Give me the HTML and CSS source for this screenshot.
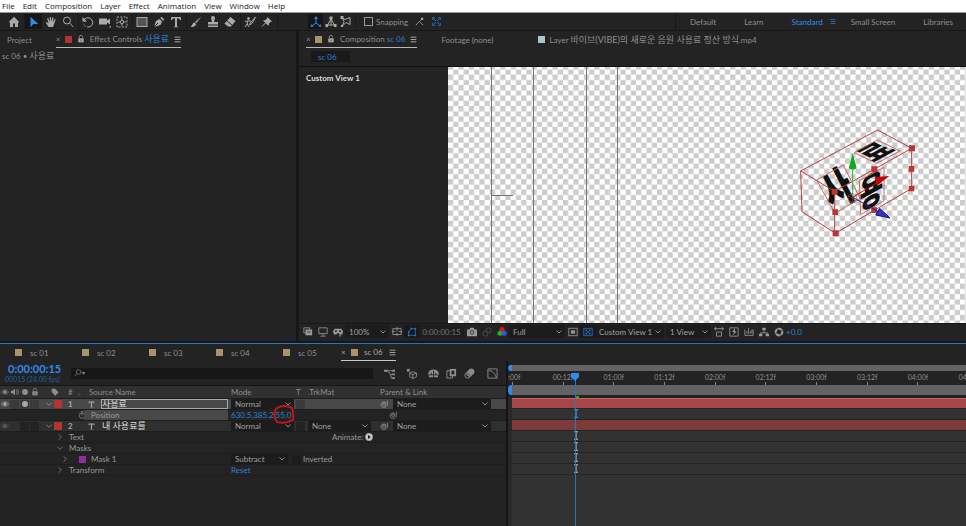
FILE: index.html
```html
<!DOCTYPE html>
<html lang="en">
<head>
  <meta charset="UTF-8">
  <title>sc 06</title>
  <link rel="stylesheet" href="styles.css">
</head>
<body>

  <!-- Icon set, 12x12 grid -->
  <svg class="sprite" aria-hidden="true">
    <symbol id="home" viewBox="0 0 12 12"><path d="M6 .8.5 6.2H2V11h3V7.5h2V11h3V6.2h1.5z" fill="currentColor"/></symbol>
    <symbol id="arrow" viewBox="0 0 12 12"><path d="M2.5.8v10.4l2.8-3.1h5z" fill="currentColor"/></symbol>
    <symbol id="hand" viewBox="0 0 12 12"><path d="M3.5 11 .8 6.6l1-.6 1.7 1.4L2.2 2.2l1-.3L4.8 6 4.7 1h1.1l.5 4.8L7.3 1.3l1.1.2-.4 4.7 1.7-3.3 1 .5L9 8.2 8 11z" fill="currentColor"/></symbol>
    <symbol id="search" viewBox="0 0 12 12"><circle cx="5" cy="4.5" r="3.5"/><path d="m7.6 7 3.6 4"/></symbol>
    <symbol id="rotate" viewBox="0 0 12 12"><path d="M2 3.5a5 5 0 0 1 8.8 3A5 5 0 0 1 6 11" /><path d="M6 11a5 5 0 0 1-4.5-3" stroke-dasharray="1 1"/><path d="M.5 1v4.5H5z" fill="currentColor" stroke="none"/></symbol>
    <symbol id="camera" viewBox="0 0 12 12"><path d="M0 2.5h8v2l3-2v6l-3-2v2H0z" fill="currentColor"/><path d="m12 9.5v2h-2z" fill="currentColor"/></symbol>
    <symbol id="anchor" viewBox="0 0 12 12"><rect x="1" y="1" width="10" height="10" stroke-dasharray="2 1.3"/><circle cx="6" cy="6" r="1.7"/><path d="M6 2v2M6 8v2M2 6h2m4 0h2"/></symbol>
    <symbol id="rect" viewBox="0 0 12 12"><rect x="1" y="1.5" width="10" height="9" fill="#555"/></symbol>
    <symbol id="pen" viewBox="0 0 12 12"><path d="m1 11 2-6 3.5-2L9 5.5 7.5 9zM7.2 2l1.3-1.3 2.8 2.8L10 4.8z" fill="currentColor"/><path d="m1 11 4-4" stroke="#232323"/></symbol>
    <symbol id="type" viewBox="0 0 12 12"><path d="M1 1h10v3H9.8L9.3 2.4H7v7.8l1.3.5v.6H3.7v-.6l1.3-.5V2.4H2.7L2.2 4H1z" fill="currentColor"/></symbol>
    <symbol id="brush" viewBox="0 0 12 12"><path d="M11.5.5 5 6l1.2 1.2zM4.5 6.5l1.7 1.7C5.5 10.5 3 11 .5 11c1.5-1 1.5-3.8 4-4.5z" fill="currentColor"/></symbol>
    <symbol id="stamp" viewBox="0 0 12 12"><path d="M4 2a2 2 0 0 1 4 0L7 6h4v2.5H1V6h4zM1 9.6h10V11H1z" fill="currentColor"/></symbol>
    <symbol id="eraser" viewBox="0 0 12 12"><path d="M6.5 1 11.5 5 7 10.5H4L.5 7.5z" fill="currentColor"/><path d="m3 5 5 4" stroke="#232323"/></symbol>
    <symbol id="roto" viewBox="0 0 12 12"><path d="M11.5 1 7 6 5 9l3-1.5zM4 5l-3 .5M4 5 3 8l-2 3M4 5h3M3 8l2 3"/><circle cx="4.5" cy="2.5" r="1" fill="currentColor"/></symbol>
    <symbol id="pin" viewBox="0 0 12 12"><path d="M6.500 1 11 5.500l-1.500.5L8 7.500 7.500 10 2 4.500 4.500 4 6 2.500z" fill="currentColor"/><path d="M4.500 7 1 10.500"/></symbol>
    <symbol id="axis" viewBox="0 0 12 12"><path d="M6 2v5L2 10M6 7l4 3"/><path d="m6 0 1.8 3H4.2zM.5 11l1-3 2 2.5zM11.500 11l-1-3-2 2.500z" fill="currentColor" stroke="none"/></symbol>
    <symbol id="world" viewBox="0 0 12 12"><path d="M6 3 2 10m4-7 4 7M1.5 9h9M6 3v6"/><path d="M4.500.5h3v3h-3zM.5 8h2.500v3H.5zM9 8h2.500v3H9z" fill="currentColor" stroke="none"/></symbol>
    <symbol id="view" viewBox="0 0 12 12"><path d="m2 1.5 3 2 5-2v7l-4-2-4 4 2-5z"/><path d="M.5 0h3v3h-3zM1 9h2v2H1z" fill="currentColor"/></symbol>
    <symbol id="snap" viewBox="0 0 12 12"><path d="M1 11 6 6l5 5M6 6l3-3"/><path d="M8 1h3v3H8z" fill="currentColor" stroke="none"/></symbol>
    <symbol id="snapbox" viewBox="0 0 12 12"><path d="M1 4V1h3m4 0h3v3m0 4v3H8m-4 0H1V8M3 3l2 2M9 3 7 5M3 9l2-2M9 9 7 7" stroke-width="1.400"/></symbol>
    <symbol id="menu" viewBox="0 0 12 12"><path d="M1 2h10M1 6h10M1 10h10" stroke-width="1.6"/></symbol>
    <symbol id="lock" viewBox="0 0 12 12"><path d="M3.5 5V3a2.300 2.300 0 0 1 5 0v1"/><path d="M2 5h8v6H2z" fill="currentColor"/><path d="M6 7v2.5" stroke="#232323"/></symbol>
    <symbol id="layers" viewBox="0 0 12 12"><path d="M1 1h7v6H1z"/><path d="M3 3h8v7H3z" fill="currentColor"/><path d="M5 6h4" stroke="#232323"/></symbol>
    <symbol id="monitor" viewBox="0 0 12 12"><path d="M1 1h10v7H1zM6 8v2.5M3 11h6"/></symbol>
    <symbol id="goggles" viewBox="0 0 12 12"><path d="M2 2h8l2 3-1 4H8L6 7 4 9H1L0 5z" fill="currentColor"/><path d="M2.5 5h2M7.5 5h2" stroke="#232323" stroke-width="2"/><path d="m7 10 3 0-1.5 2z" fill="currentColor"/></symbol>
    <symbol id="grid" viewBox="0 0 12 12"><path d="M1 2h10v7H1zM6 0v5M6 7v4M0 5.5h4M8 5.5h4"/></symbol>
    <symbol id="mask" viewBox="0 0 12 12"><path d="M2 10V6q1-3 4-4h4v8z"/><path d="M1 9h2v2H1zM9 9h2v2H9zM9 1h2v2H9zM1 5h2v2H1zM4 1h2v2H4z" fill="currentColor" stroke="none"/></symbol>
    <symbol id="photo" viewBox="0 0 12 12"><path d="M0 3h3l1-2h4l1 2h3v8H0z" fill="currentColor"/><circle cx="6" cy="6.5" r="2.2" stroke="#232323"/></symbol>
    <symbol id="showshot" viewBox="0 0 12 12"><circle cx="4" cy="8" r="3"/><circle cx="8" cy="4" r="3"/></symbol>
    <symbol id="rgb" viewBox="0 0 12 12"><circle cx="6" cy="3" r="3" fill="#e11"/><circle cx="3.5" cy="7.5" r="3" fill="#1b2"/><circle cx="8.5" cy="7.5" r="3" fill="#35f"/></symbol>
    <symbol id="roi" viewBox="0 0 12 12"><rect x="1" y="1.5" width="10" height="9"/><path d="M3.5 4h5v4h-5z" fill="currentColor"/></symbol>
    <symbol id="alpha" viewBox="0 0 12 12"><rect x="1" y="1.5" width="10" height="9"/><path d="M3 3h2v2H3zM7 3h2v2H7zM5 5h2v2H5zM3 7h2v2H3zM7 7h2v2H7z" fill="currentColor" stroke="none"/></symbol>
    <symbol id="pixel" viewBox="0 0 12 12"><path d="M0 2h12M2 0v4m8-4v4M3 6h6v5H3z"/></symbol>
    <symbol id="fast" viewBox="0 0 12 12"><path d="M1 1h10v10H1z"/><path d="m7 1-3 5h2L5 10l4-5H7z" fill="currentColor" stroke="none"/></symbol>
    <symbol id="tlbtn" viewBox="0 0 12 12"><path d="M1 3v7h10V3M3.5 5v3m2-7v7m2-3v3m2-5v5"/></symbol>
    <symbol id="flow" viewBox="0 0 12 12"><path d="M6 4v3M2 9V7h8v2"/><path d="M4 1h4v3H4zM0 8h4v3H0zM8 8h4v3H8z" fill="currentColor" stroke="none"/></symbol>
    <symbol id="shutter" viewBox="0 0 12 12"><circle cx="6" cy="6" r="4" stroke-width="2.5"/><path d="m3 1 3 3m5-1L8 6m1 5L6 8M1 9l3-3" stroke="#232323" stroke-width=".8"/></symbol>
    <symbol id="mini" viewBox="0 0 12 12"><path d="M2 3h8M4 3l3 4h3M7 7l1 4h2"/><path d="M0 2h4v2H0zM9 2h3v2H9zM9 6h3v2H9zM9 10h3v2H9z" fill="currentColor" stroke="none"/></symbol>
    <symbol id="cube" viewBox="0 0 12 12"><path d="m7.5 4 4 1.5v4l-4 2-3.5-2v-4zM4 5.5l3.5 1.7 4-1.7M7.500 7v4"/><path d="M1 1h3v3H1z" fill="currentColor"/></symbol>
    <symbol id="shy" viewBox="0 0 12 12"><path d="M0 7a6 5.5 0 0 1 12 0zM1 8h10v2H1z" fill="currentColor"/><path d="M6 3v7M3.5 5v3m5-3v3" stroke="#232323"/></symbol>
    <symbol id="blend" viewBox="0 0 12 12"><path d="M1 3h6v8H1z"/><path d="M4 1h7v8H4z" fill="currentColor"/><path d="M6 3h3v4H6z" fill="#232323" stroke="none"/></symbol>
    <symbol id="blur" viewBox="0 0 12 12"><circle cx="4" cy="8" r="3"/><circle cx="6" cy="6" r="3" fill="#666"/><circle cx="8" cy="4" r="3" fill="#888"/></symbol>
    <symbol id="graph" viewBox="0 0 12 12"><path d="M1 1h10v10H1zM2 3c4 0 6 2 8 7"/></symbol>
    <symbol id="eye" viewBox="0 0 12 12"><path d="M.5 6Q6-.5 11.5 6 6 12.5.5 6z"/><circle cx="6" cy="6" r="2" fill="currentColor"/></symbol>
    <symbol id="speaker" viewBox="0 0 12 12"><path d="M0 4h2.5L6 1v10L2.5 8H0z" fill="currentColor"/><path d="M8 3q2 3 0 6M10 1.5q3 4.5 0 9"/></symbol>
    <symbol id="dot" viewBox="0 0 12 12"><circle cx="6" cy="6" r="4" fill="currentColor"/></symbol>
    <symbol id="tag" viewBox="0 0 12 12"><path d="M1 1h5l5.5 5.5-5 5L1 6z" fill="currentColor"/></symbol>
    <symbol id="down" viewBox="0 0 12 12"><path d="m2 4 4 4 4-4"/></symbol>
    <symbol id="right" viewBox="0 0 12 12"><path d="m4 2 4 4-4 4"/></symbol>
    <symbol id="watch" viewBox="0 0 12 12"><circle cx="6" cy="7" r="4"/><path d="M6 7V4.5M4 1h4M6 1v2M2 2 1 3.5m9-1.5 1 1.5"/></symbol>
    <symbol id="whip" viewBox="0 0 12 12"><path d="M8 6a2 2 0 1 0-2 2q3 1 3-3a4 4 0 1 0-3 6q3 0 5-3V1"/></symbol>
    <symbol id="play" viewBox="0 0 12 12"><circle cx="6" cy="6" r="5.5" fill="#c8c8c8"/><path d="m4.5 3 4 3-4 3z" fill="#111" stroke="none"/></symbol>
    <symbol id="ibeam" viewBox="0 0 6 9"><path d="M1 .5h4M1 8.5h4M3 .5v8" stroke-width="1.4"/></symbol>
  </svg>

  <nav class="menubar">
    <button>File</button><button>Edit</button><button>Composition</button><button>Layer</button><button>Effect</button><button>Animation</button><button>View</button><button>Window</button><button>Help</button>
  </nav>

  <header class="toolbar">
    <div class="tools home"><button aria-label="Home"><svg><use href="#home"/></svg></button></div>
    <div class="tools">
      <button class="on" aria-label="Selection"><svg><use href="#arrow"/></svg></button>
      <button aria-label="Hand"><svg><use href="#hand"/></svg></button>
      <button aria-label="Zoom"><svg><use href="#search"/></svg></button>
    </div>
    <div class="tools">
      <button aria-label="Rotate"><svg><use href="#rotate"/></svg></button>
      <button aria-label="Camera"><svg><use href="#camera"/></svg></button>
      <button aria-label="Pan behind"><svg><use href="#anchor"/></svg></button>
    </div>
    <div class="tools">
      <button aria-label="Rectangle"><svg><use href="#rect"/></svg></button>
      <button aria-label="Pen"><svg><use href="#pen"/></svg></button>
      <button aria-label="Type"><svg><use href="#type"/></svg></button>
    </div>
    <div class="tools">
      <button aria-label="Brush"><svg><use href="#brush"/></svg></button>
      <button aria-label="Clone stamp"><svg><use href="#stamp"/></svg></button>
      <button aria-label="Eraser"><svg><use href="#eraser"/></svg></button>
    </div>
    <div class="tools">
      <button aria-label="Roto brush"><svg><use href="#roto"/></svg></button>
      <button aria-label="Puppet pin"><svg><use href="#pin"/></svg></button>
    </div>
    <div class="tools axes">
      <button class="on" aria-label="Local axis"><svg><use href="#axis"/></svg></button>
      <button aria-label="World axis"><svg><use href="#world"/></svg></button>
      <button aria-label="View axis"><svg><use href="#view"/></svg></button>
    </div>
    <label class="snapping"><input type="checkbox"> Snapping</label>
    <div class="tools">
      <button aria-label="Snap edges"><svg><use href="#snap"/></svg></button>
      <button class="blue" aria-label="Snap features"><svg><use href="#snapbox"/></svg></button>
    </div>
    <nav class="workspaces">
      <a href="#">Default</a>
      <a href="#">Learn</a>
      <a href="#" class="current">Standard</a>
      <button aria-label="Workspace menu"><svg><use href="#menu"/></svg></button>
      <a href="#">Small Screen</a>
      <a href="#">Libraries</a>
    </nav>
  </header>

  <main class="panels">
    <section class="effects">
      <div class="tabs">
        <button class="tab project">Project</button>
        <button class="tab active"><span class="close">×</span><i class="swatch red"></i><svg><use href="#lock"/></svg><span>Effect Controls <b class="ko">사용료</b></span><svg class="burger"><use href="#menu"/></svg></button>
      </div>
      <p class="source">sc 06 • <span class="ko">사용료</span></p>
    </section>

    <section class="composition">
      <div class="tabs">
        <button class="tab active"><span class="close">×</span><i class="swatch"></i><svg><use href="#lock"/></svg><span>Composition <b>sc 06</b></span><svg class="burger"><use href="#menu"/></svg></button>
        <button class="tab">Footage (none)</button>
        <button class="tab layer"><i class="swatch teal"></i><span>Layer <span class="ko">바이브(VIBE)의 새로운 음원 사용료 정산 방식</span>.mp4</span></button>
      </div>
      <div class="crumbs"><button>sc 06</button></div>

      <div class="viewer">
        <strong class="viewname">Custom View 1</strong>
        <svg class="stage">
          <defs>
            <pattern id="checker" width="10.45" height="10.45" patternUnits="userSpaceOnUse">
              <rect width="10.45" height="10.45" fill="#fff"/>
              <path d="M5.2 2.5h5.25v5.2H5.2zM0 7.7h5.2v2.75H0zM0 0h5.2v2.5H0z" fill="#ccc"/>
            </pattern>
          </defs>
          <rect width="100%" height="100%" fill="url(#checker)"/>
          <path d="M43.5 0v260M85.5 0v260M138.5 0v260M169.5 0v260M43 128.5h22" stroke="#777" fill="none"/>
          <!-- 3D text layer with its bounding box and axis gizmo -->
          <g transform="translate(332 43) scale(.3333)">
            <g class="glyphs">
              <text transform="matrix(.84 -.45 .6 1.15 155 300)">사</text>
              <text transform="matrix(.78 -.42 0 1.12 238 302)">용</text>
              <text transform="matrix(.78 -.42 .76 .38 279 158)">료</text>
            </g>
            <g fill="none" stroke="#b84040" stroke-width="3">
              <path d="M62 183 293 60l102 55v120L166 370 66 305zM62 183l102 61v126M164 244l231-129"/>
              <path d="m222 128 70-38 68 33-70 37zM238 212l74-40v100l-70 42zM110 210l80-45 50 100-75 45z" stroke="#c86868"/>
            </g>
            <path d="M155 236h18v18h-18zM157 298h17v17h-17zM158 361h18v18h-18zM387 106h18v18h-18zM386 168h17v17h-17zM386 227h17v17h-17zM274 169h18v18h-18zM274 292h17v17h-17z" fill="#b83636"/>
            <path d="M218 260V170" stroke="#2b3" stroke-width="3"/><path d="m218 130 12 45q-12 8-24 0z" fill="#12a820"/>
            <path d="m218 262 80-48" stroke="#b11" stroke-width="3"/><path d="m328 198-42 3q-4 14 8 24z" fill="#c00808"/>
            <path d="m218 262 80 44" stroke="#22a" stroke-width="3"/><path d="m330 324-31-29-12 20z" fill="#33b" stroke="#119" stroke-width="3"/>
            <path d="m205 256 12-6 13 6v14l-13 8-12-8zM205 256l12 8 13-8m-13 8v14" fill="none" stroke="#944" stroke-width="2"/>
          </g>
        </svg>
      </div>

      <div class="viewbar">
        <button aria-label="Preview"><svg><use href="#layers"/></svg></button>
        <button aria-label="Primary viewer"><svg><use href="#monitor"/></svg></button>
        <button aria-label="VR"><svg><use href="#goggles"/></svg></button>
        <select class="zoom" aria-label="Magnification"><option>100%</option></select>
        <button aria-label="Guides"><svg><use href="#grid"/></svg></button>
        <button class="on" aria-label="Mask visibility"><svg><use href="#mask"/></svg></button>
        <button class="time">0:00:00:15</button>
        <button aria-label="Snapshot"><svg><use href="#photo"/></svg></button>
        <button class="dim" aria-label="Show snapshot"><svg><use href="#showshot"/></svg></button>
        <button class="rgb" aria-label="Channels"><svg><use href="#rgb"/></svg></button>
        <select class="res" aria-label="Resolution"><option>Full</option></select>
        <button aria-label="Region"><svg><use href="#roi"/></svg></button>
        <button class="on" aria-label="Transparency grid"><svg><use href="#alpha"/></svg></button>
        <select class="cam" aria-label="3D view"><option>Custom View 1</option></select>
        <select class="count" aria-label="View layout"><option>1 View</option></select>
        <button aria-label="Pixel aspect"><svg><use href="#pixel"/></svg></button>
        <button aria-label="Fast previews"><svg><use href="#fast"/></svg></button>
        <button aria-label="Timeline"><svg><use href="#tlbtn"/></svg></button>
        <button aria-label="Flowchart"><svg><use href="#flow"/></svg></button>
        <button aria-label="Reset exposure"><svg><use href="#shutter"/></svg></button>
        <button class="exposure">+0.0</button>
      </div>
    </section>
  </main>

  <section class="timeline">
    <div class="comp-tabs">
      <button><i class="swatch"></i>sc 01</button>
      <button><i class="swatch"></i>sc 02</button>
      <button><i class="swatch"></i>sc 03</button>
      <button><i class="swatch"></i>sc 04</button>
      <button><i class="swatch"></i>sc 05</button>
      <button class="active"><span class="close">×</span><i class="swatch"></i><span>sc 06</span><svg class="burger"><use href="#menu"/></svg></button>
    </div>

    <div class="timeline-body">
      <div class="layers">
        <div class="controls">
          <div class="timecode"><b>0:00:00:15</b><small>00015 (24.00 fps)</small></div>
          <label class="searchbox"><svg><use href="#search"/></svg><span>▾</span><input type="text" aria-label="Search layers"></label>
          <div class="switches">
            <button aria-label="Mini flowchart"><svg><use href="#mini"/></svg></button>
            <button aria-label="Draft 3D"><svg><use href="#cube"/></svg></button>
            <button aria-label="Hide shy layers"><svg><use href="#shy"/></svg></button>
            <button aria-label="Frame blending"><svg><use href="#blend"/></svg></button>
            <button aria-label="Motion blur"><svg><use href="#blur"/></svg></button>
            <button aria-label="Graph editor"><svg><use href="#graph"/></svg></button>
          </div>
        </div>

        <div class="row head">
          <svg><use href="#eye"/></svg><svg><use href="#speaker"/></svg><svg><use href="#dot"/></svg><svg><use href="#lock"/></svg>
          <span class="label"><svg><use href="#tag"/></svg></span>
          <span class="num"># &nbsp; .</span>
          <span class="name">Source Name</span>
          <span class="mode">Mode</span>
          <span>T</span>
          <span>.TrkMat</span>
          <span class="parent">Parent &amp; Link</span>
        </div>

        <div class="row layer-row selected">
          <svg><use href="#eye"/></svg><i class="box"></i><i class="box"><svg><use href="#dot"/></svg></i><i class="box"></i>
          <span class="label"><svg><use href="#down"/></svg><i class="swatch red"></i></span>
          <span class="num">1</span>
          <span class="name"><svg><use href="#type"/></svg><input class="ko" type="text" value="사용료" aria-label="Layer name"></span>
          <span class="mode"><select aria-label="Mode"><option>Normal</option></select></span>
          <i class="box"></i>
          <span></span>
          <span class="parent"><svg><use href="#whip"/></svg><select aria-label="Parent"><option>None</option></select></span>
        </div>

        <div class="row prop">
          <span class="indent watch"><svg><use href="#watch"/></svg></span>
          <span class="prop-name">Position</span>
          <span class="values"><a href="#">630.5</a>,<a href="#">385.2</a>,<a href="#" class="marked">55.0<svg viewBox="0 0 24 20"><path d="M5 3Q12-1 20 3q2 6 1 12-8 4-16 2Q0 10 4 4z"/></svg></a></span>
          <span class="link"><svg><use href="#whip"/></svg></span>
        </div>

        <div class="row layer-row">
          <svg class="dim"><use href="#eye"/></svg><i></i><i class="box"></i><i class="box"></i>
          <span class="label"><svg><use href="#down"/></svg><i class="swatch red"></i></span>
          <span class="num">2</span>
          <span class="name"><svg><use href="#type"/></svg><span class="ko title">내 사용료를</span></span>
          <span class="mode"><select aria-label="Mode"><option>Normal</option></select></span>
          <i class="box"></i>
          <span><select aria-label="Track matte"><option>None</option></select></span>
          <span class="parent"><svg><use href="#whip"/></svg><select aria-label="Parent"><option>None</option></select></span>
        </div>

        <div class="row prop">
          <span class="indent"><svg><use href="#right"/></svg></span><span>Text</span>
          <span class="animate">Animate: <button aria-label="Add animator"><svg><use href="#play"/></svg></button></span>
        </div>
        <div class="row prop">
          <span class="indent"><svg><use href="#down"/></svg></span><span>Masks</span>
        </div>
        <div class="row prop">
          <span class="indent mask"><i class="box"></i><svg><use href="#right"/></svg></span><span class="mask-name"><i class="swatch purple"></i>Mask 1</span>
          <span class="values"><select aria-label="Mask mode"><option>Subtract</option></select></span>
          <label class="inverted"><input type="checkbox">Inverted</label>
        </div>
        <div class="row prop">
          <span class="indent"><svg><use href="#right"/></svg></span><span>Transform</span>
          <span class="values"><a href="#">Reset</a></span>
        </div>
      </div>

      <div class="tracks">
        <div class="navigator"></div>
        <div class="ruler">
          <span>0:00f</span><span>00:12f</span><span>01:00f</span><span>01:12f</span><span>02:00f</span><span>02:12f</span><span>03:00f</span><span>03:12f</span><span>04:00f</span><span>04:12f</span>
        </div>
        <div class="workarea"></div>
        <div class="cache"><i></i></div>
        <div class="lane"><div class="bar bright"></div></div>
        <div class="lane key now"><svg><use href="#ibeam"/></svg></div>
        <div class="lane"><div class="bar"></div></div>
        <div class="lane key"><svg><use href="#ibeam"/></svg></div>
        <div class="lane key"><svg><use href="#ibeam"/></svg></div>
        <div class="lane key"><svg><use href="#ibeam"/></svg></div>
        <div class="lane key"><svg><use href="#ibeam"/></svg></div>
        <div class="playhead"><svg viewBox="0 0 8 8"><path d="M0 0h8v4L4 8 0 4z" fill="#2d8ceb"/></svg></div>
      </div>
    </div>
  </section>

</body>
</html>
```

FILE: styles.css
```css
* {
  box-sizing: border-box;
}

body {
  margin: 0;
  height: 100vh;
  display: flex;
  flex-direction: column;
  overflow: hidden;
  background: #171717;
  color: #8e8e8e;
  font-family: Lato, "Noto Sans CJK KR", sans-serif;
  font-size: 8px;
  line-height: 10px;
}

button, input, select {
  margin: 0;
  padding: 0;
  border: 0;
  background: none;
  color: inherit;
  font: inherit;
}

a {
  color: inherit;
  text-decoration: none;
}

svg {
  display: block;
  width: 10px;
  height: 10px;
  flex: none;
  fill: none;
  stroke: currentColor;
  stroke-width: 1;
}

.sprite {
  position: absolute;
  width: 0;
  height: 0;
}

symbol path[fill="currentColor"] {
  stroke: none;
}

select {
  appearance: none;
  height: 10px;
  padding-left: 4px;
  background: #1c1c1c url("data:image/svg+xml,%3Csvg xmlns='http://www.w3.org/2000/svg' width='6' height='4'%3E%3Cpath d='M.5.5 3 3 5.5.5' fill='none' stroke='%23888'/%3E%3C/svg%3E") no-repeat right 3px center;
  color: #a0a0a0;
}

input[type="checkbox"] {
  appearance: none;
  width: 9px;
  height: 9px;
  background: #1c1c1c;
}

.ko {
  font-size: 9px;
  font-weight: normal;
}

.swatch {
  width: 7px;
  height: 7px;
  flex: none;
  background: #a8936e;
}

.red { background: #b23434; }
.teal { background: #a3c8c6; }
.purple { background: #8e2d9c; }
.dim { opacity: 0.4; }

/* Menu bar */
.menubar {
  display: flex;
  gap: 8px;
  height: 13px;
  flex: none;
  padding-left: 2px;
  background: #fff;
  border-bottom: 1px solid #999;
  color: #222;
  font-family: "Open Sans", sans-serif;
}

/* Toolbar */
.toolbar {
  display: flex;
  align-items: center;
  height: 17px;
  flex: none;
  background: #232323;
}

.tools {
  display: flex;
  padding-right: 2px;
  border-right: 1px solid #1a1a1a;
  color: #aaa;
}

.tools button {
  display: grid;
  place-items: center;
  width: 17px;
  height: 15px;
}

.tools svg {
  width: 12px;
  height: 12px;
}

.home {
  padding-left: 5px;
}

.tools .on {
  background: #161616;
  color: #2d8ceb;
}

.tools .blue {
  color: #2774c4;
}

.axes {
  margin-left: 30px;
}

.axes button {
  width: 15px;
}

.snapping {
  display: flex;
  align-items: center;
  gap: 3px;
  padding: 0 3px 0 8px;
}

.snapping input {
  border: 1px solid #999;
  background: none;
}

.snapping + .tools {
  border: 0;
}

.snapping + .tools svg {
  width: 9px;
  height: 9px;
}

.workspaces {
  display: flex;
  align-items: center;
  gap: 28px;
  height: 17px;
  margin-left: auto;
  padding: 0 13px 0 14px;
  border-left: 1px solid #171717;
}

.workspaces button {
  margin: 0 -13px 0 -21px;
  color: #2774c4;
}

.workspaces svg {
  width: 6px;
  height: 7px;
}

.current {
  color: #2d8ceb;
}

/* Upper panels */
.panels {
  display: flex;
  gap: 3px;
  height: 310px;
  flex: none;
  margin-top: 1px;
}

.effects {
  flex: 0 0 296px;
  background: #232323;
}

.composition {
  flex: 1;
  min-width: 0;
  display: flex;
  flex-direction: column;
  background: #232323;
}

.tabs {
  display: flex;
  gap: 24px;
  height: 17px;
  padding-left: 7px;
}

.tab {
  display: flex;
  align-items: center;
  gap: 5px;
  white-space: nowrap;
}

.tab svg {
  width: 8px;
  height: 8px;
  color: #aaa;
}

.tab .burger, .comp-tabs .burger {
  width: 7px;
  height: 7px;
}

.tab b {
  color: #2d80d2;
  font-weight: normal;
}

.tab.active {
  border-bottom: 1px solid #b8b8b8;
}

.close {
  width: 4px;
}

.layer {
  margin-left: 20px;
}

.source {
  margin: 3px 0 0 2px;
}

.crumbs {
  padding: 3px 12px 4px;
}

.crumbs button {
  display: block;
  width: 39px;
  height: 11px;
  padding-left: 7px;
  background: #191919;
  color: #2d80d2;
  text-align: left;
}

.viewer {
  display: flex;
  flex: 1;
  border-top: 1px solid #111;
}

.viewname {
  flex: 0 0 149px;
  padding: 6px 7px;
  color: #ddd;
}

.stage {
  flex: 1;
  height: auto;
  stroke: none;
}

.glyphs text {
  fill: #111;
  font: 900 100px "Noto Sans CJK KR", sans-serif;
}

.viewbar {
  display: flex;
  align-items: center;
  height: 18px;
  padding: 0 0 2px 1px;
  border-top: 1px solid #181818;
  color: #999;
}

.viewbar button {
  display: grid;
  place-items: center;
  width: 15px;
  height: 13px;
}

.viewbar select {
  height: 13px;
}

.viewbar .on {
  background: #191919;
  color: #2774c4;
}

.rgb svg {
  stroke: none;
}

.viewbar .time {
  width: 45px;
  background: #1e1e1e;
  color: #777;
}

.viewbar .exposure {
  width: auto;
  color: #2d80d2;
}

.zoom { width: 44px; }
.res { width: 56px; }
.cam { width: 69px; margin-right: 2px; }
.count { width: 45px; }

/* Timeline */
.timeline {
  display: flex;
  flex-direction: column;
  flex: 1;
  margin-top: 2px;
  border-top: 1px solid #2774b8;
  background: #232323;
}

.comp-tabs {
  display: flex;
  height: 17px;
  padding-left: 15px;
}

.comp-tabs button {
  display: flex;
  align-items: center;
  gap: 8px;
  width: 67px;
}

.comp-tabs .active {
  width: auto;
  gap: 6px;
  margin-left: -9px;
  border-bottom: 1px solid #c8c8c8;
  color: #aaa;
}

.timeline-body {
  display: flex;
  flex: 1;
}

.layers {
  flex: 0 0 508px;
  border-right: 2px solid #141414;
}

.controls {
  display: flex;
  align-items: center;
  height: 24px;
  padding: 0 8px 0 5px;
}

.timecode {
  width: 66px;
  color: #1f5fa0;
}

.timecode b, .timecode small {
  display: block;
  white-space: nowrap;
}

.timecode b {
  padding-left: 3px;
  color: #2d8ceb;
  font-size: 11px;
  line-height: 13px;
}

.timecode small {
  font-size: 7px;
  line-height: 9px;
}

.searchbox {
  display: flex;
  align-items: center;
  flex: 1;
  height: 11px;
  padding-left: 3px;
  background: #171717;
}

.searchbox svg {
  width: 8px;
  height: 8px;
  transform: scaleX(-1);
}

.searchbox span {
  font-size: 6px;
}

.searchbox input {
  flex: 1;
  min-width: 0;
}

.switches {
  display: flex;
  gap: 7px;
  padding-left: 11px;
}

.switches button:nth-child(2) {
  margin: 0 4px;
}

.switches button:last-child {
  margin-left: 5px;
}

.switches svg {
  width: 11px;
  height: 11px;
}

.row {
  display: grid;
  grid-template-columns: 10px 10px 10px 10px 24px 20px 144px 68px 12px 70px 1fr;
  align-items: center;
  height: 11px;
  border-bottom: 1px solid #1d1d1d;
  white-space: nowrap;
}

.row svg {
  width: 8px;
  height: 8px;
  margin: 0 auto;
}

.head {
  height: 14px;
  border-top: 1px solid #151515;
  background: #303030;
}

.layer-row {
  background: #2f2f2f;
  color: #aaa;
}

.selected {
  background: #484848;
}

.box {
  width: 9px;
  height: 9px;
  background: #222;
}

.selected .box {
  background: #3a3a3a;
}

.label {
  display: flex;
  align-items: center;
  padding-left: 5px;
}

.label svg {
  margin: 0;
}

.head .label svg {
  margin: 0 6px;
}

.label .swatch {
  width: 8px;
  height: 8px;
  margin-left: 1px;
}

.num {
  padding-left: 4px;
}

.layer-row .num {
  font-weight: bold;
}

.head .name {
  padding-left: 5px;
}

.name {
  display: flex;
  align-items: center;
}

.name svg {
  width: 7px;
  height: 7px;
  margin: 0 6px 0 4px;
}

.name .ko {
  color: #ddd;
}

.name input {
  width: 128px;
  height: 10px;
  border: 1px solid #aaa;
}

.title {
  padding-left: 1px;
}

.mode, .values {
  padding-left: 3px;
}

.row select {
  display: block;
  width: 63px;
}

.row .values {
  grid-column: 8;
  color: #2d80d2;
}

.values select {
  width: 57px;
}

.parent {
  display: flex;
  align-items: center;
  padding-left: 2px;
}

.row .parent svg {
  margin: 0 5px 0 0;
}

.row .parent select {
  width: 98px;
}

.prop {
  grid-template-columns: 40px 24px 5px 15px 7px 19px 118px 64px 16px 64px 1fr;
  color: #999;
}

.indent {
  grid-column: 1 / 3;
  padding-left: 56px;
}

.indent + span {
  grid-column: 3 / 8;
  padding-left: 5px;
}

.indent.watch {
  grid-column: 1 / 5;
  padding-left: 78px;
}

.row .prop-name {
  grid-column: 5 / 8;
  padding-left: 7px;
  background: #484848;
}

.indent.mask {
  grid-column: 1 / 4;
  display: flex;
  padding-left: 31px;
}

.mask svg {
  margin: 0 0 0 26px;
}

.row .mask-name {
  grid-column: 4 / 8;
  display: flex;
  align-items: center;
  gap: 5px;
  padding-left: 10px;
}

.link {
  grid-column: 11;
  padding-left: 17px;
}

.link svg {
  margin: 0;
}

.animate {
  grid-column: 10 / 12;
  display: flex;
  gap: 2px;
  padding-left: 24px;
}

.inverted {
  grid-column: 9 / 11;
  display: flex;
  align-items: center;
  gap: 2px;
}

.marked {
  position: relative;
}

/* Hand-drawn ring round the Z value */
.marked svg {
  position: absolute;
  left: -4px;
  top: -5px;
  width: 24px;
  height: 20px;
  stroke: #c81414;
  stroke-width: 2;
}

/* Tracks */
.tracks {
  position: relative;
  flex: 1;
  min-width: 0;
  overflow: hidden;
  padding-top: 4px;
  background: linear-gradient(to right, #292929 4px, #323232 4px);
}

.tracks::before {
  content: "";
  position: absolute;
  inset: 0 0 auto;
  height: 24px;
  background: #232323;
}

.navigator, .workarea {
  position: relative;
  height: 6px;
  border-left: 4px solid #2d8ceb;
  border-radius: 4px 0 0 4px;
  background: #636363;
}

.workarea {
  height: 10px;
}

.ruler {
  position: relative;
  display: grid;
  grid-template-columns: repeat(10, 1fr);
  height: 14px;
  margin: 0 -28px 0 -21px;
  padding-top: 1px;
  font-size: 7px;
  text-align: center;
}

.ruler span::after {
  content: "";
  display: block;
  width: 1px;
  height: 3px;
  margin: 0 auto;
  background: #888;
}

.cache {
  height: 3px;
  padding: 1px 0 0 67px;
  background: #222;
}

.cache i {
  display: block;
  width: 4px;
  height: 2px;
  background: #1eb41e;
}

.lane {
  height: 11px;
  padding-left: 4px;
  border-bottom: 1px solid #242424;
}

.bar {
  height: 10px;
  background: #7c3a3a;
}

.bright {
  background: #a64646;
  border-top: 1px solid #c86464;
}

.key {
  padding-left: 65px;
  color: #8ea2b6;
}

.key svg {
  width: 6px;
  height: 9px;
}

.now {
  color: #2d8ceb;
}

.playhead {
  position: absolute;
  top: 12px;
  bottom: 0;
  left: 67px;
  width: 1px;
  background: #2d74b8;
}

.playhead svg {
  width: 8px;
  height: 8px;
  margin-left: -4px;
  stroke: none;
}
```
